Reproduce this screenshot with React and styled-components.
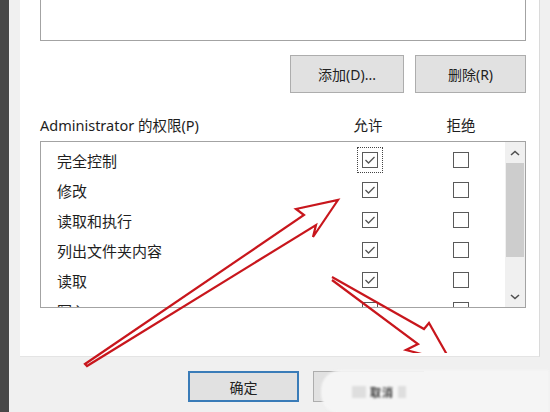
import React from "react";
import styled, { createGlobalStyle } from "styled-components";

const GlobalStyle = createGlobalStyle`
  html, body { margin: 0; padding: 0; background: #f0f0f0; }
  body { font-family: "Noto Sans", "Noto Sans CJK SC", sans-serif; color: #1e1e1e; }
  * { box-sizing: border-box; }
`;

const Page = styled.div`
  position: relative;
  width: 550px;
  height: 412px;
  overflow: hidden;
  display: flex;
  background: #f0f0f0;
`;

const DarkBar = styled.div`
  width: 9px;
  flex: none;
  background: #474747;
`;

const Main = styled.div`
  flex: 1;
  display: flex;
  flex-direction: column;
`;

const PanelWrap = styled.div`
  height: 357px;
  padding-left: 11px;
  display: flex;
`;

const Panel = styled.div`
  width: 520px;
  height: 100%;
  background: #fff;
  border-right: 1px solid #dadada;
  border-bottom: 1px solid #e4e4e4;
  padding: 0 13px 0 20px;
  display: flex;
  flex-direction: column;
`;

const TopList = styled.div`
  height: 41px;
  border: 1px solid #a3a3a3;
  border-top: none;
  background: #fff;
`;

const ButtonRow = styled.div`
  margin-top: 14px;
  display: flex;
  justify-content: flex-end;
  gap: 11px;
`;

const Button = styled.div`
  width: ${(p) => p.$w || 111}px;
  height: ${(p) => p.$h || 38}px;
  background: #e1e1e1;
  border: ${(p) => (p.$primary ? "2px solid #3a7cb8" : "1px solid #adadad")};
  display: flex;
  align-items: center;
  justify-content: center;
  font-size: 14px;
  color: #222;
`;

const Columns = styled.div`
  display: grid;
  grid-template-columns: 283px 94px 88px;
  align-items: center;
`;

const Header = styled(Columns)`
  margin-top: 20px;
  height: 22px;
  font-size: 14.5px;
`;

const HeadLabel = styled.div`
  text-align: ${(p) => (p.$center ? "center" : "left")};
  padding-right: ${(p) => p.$shift || 0}px;
  white-space: nowrap;
`;

const PermList = styled.div`
  margin-top: 6px;
  height: 167px;
  border: 1px solid #a3a3a3;
  display: flex;
  overflow: hidden;
`;

const Rows = styled.div`
  flex: 1;
  padding-top: 3px;
  overflow: hidden;
`;

const Row = styled(Columns)`
  height: 30px;
  grid-template-columns: 282px 94px 88px;
  font-size: 15px;
`;

const RowName = styled.div`
  padding-left: 16px;
  white-space: nowrap;
`;

const Cell = styled.div`
  display: flex;
  justify-content: center;
  align-items: center;
`;

const Box = styled.div`
  width: 16px;
  height: 16px;
  border: 1px solid #5a5a5a;
  background: #fff;
  display: flex;
  align-items: center;
  justify-content: center;
  outline: ${(p) => (p.$focus ? "1px dotted #444" : "none")};
  outline-offset: 4px;
`;

const Scrollbar = styled.div`
  width: 20px;
  flex: none;
  background: #f0f0f0;
  display: flex;
  flex-direction: column;
`;

const ScrollArrow = styled.div`
  height: 21px;
  display: flex;
  align-items: center;
  justify-content: center;
`;

const Thumb = styled.div`
  height: 94px;
  margin: 0 1px;
  background: #cdcdcd;
`;

const Track = styled.div`
  flex: 1;
`;

const Footer = styled.div`
  flex: 1;
  display: flex;
  gap: 14px;
  padding: 14px 0 0 179px;
`;

const Smear = styled.div`
  position: absolute;
  left: 321px;
  top: 370px;
  width: 228px;
  height: 44px;
  border-radius: 20px 0 0 20px;
  background: #f5f5f5;
  filter: blur(1.2px);
  display: flex;
  align-items: center;
  padding-left: 31px;
  gap: 4px;
`;

const SmearText = styled.span`
  font-family: "Noto Sans CJK SC", sans-serif;
  font-size: 11px;
  font-weight: 700;
  color: #3a3a3a;
  letter-spacing: 1px;
`;

const Patch = styled.span`
  width: ${(p) => p.$w}px;
  height: 12px;
  background: #dedede;
`;

const Overlay = styled.svg`
  position: absolute;
  left: 0;
  top: 0;
  pointer-events: none;
`;

const Check = () => (
  <svg width="12" height="12" viewBox="0 0 12 12">
    <polyline points="1.5,6 4.5,9 10.5,3" fill="none" stroke="#555" strokeWidth="1.3" />
  </svg>
);

const Chevron = ({ up }) => (
  <svg width="10" height="6" viewBox="0 0 10 6">
    <polyline
      points={up ? "1,5 5,1.5 9,5" : "1,1 5,4.5 9,1"}
      fill="none"
      stroke="#505050"
      strokeWidth="1.6"
    />
  </svg>
);

const perms = ["完全控制", "修改", "读取和执行", "列出文件夹内容", "读取", "写入"];

export default function App() {
  return (
    <>
      <GlobalStyle />
      <Page>
        <DarkBar />
        <Main>
          <PanelWrap>
            <Panel>
              <TopList />
              <ButtonRow>
                <Button $w={114}>添加(D)...</Button>
                <Button $w={111}>删除(R)</Button>
              </ButtonRow>
              <Header>
                <HeadLabel>Administrator 的权限(P)</HeadLabel>
                <HeadLabel $center $shift={4}>允许</HeadLabel>
                <HeadLabel $center>拒绝</HeadLabel>
              </Header>
              <PermList>
                <Rows>
                  {perms.map((p, i) => (
                    <Row key={p}>
                      <RowName>{p}</RowName>
                      <Cell>
                        <Box $focus={i === 0}>
                          <Check />
                        </Box>
                      </Cell>
                      <Cell>
                        <Box />
                      </Cell>
                    </Row>
                  ))}
                </Rows>
                <Scrollbar>
                  <ScrollArrow>
                    <Chevron up />
                  </ScrollArrow>
                  <Thumb />
                  <Track />
                  <ScrollArrow>
                    <Chevron />
                  </ScrollArrow>
                </Scrollbar>
              </PermList>
            </Panel>
          </PanelWrap>
          <Footer>
            <Button $primary $h={31}>确定</Button>
            <Button $h={31} />
          </Footer>
        </Main>
        <Smear>
          <Patch $w={14} />
          <SmearText>取消</SmearText>
          <Patch $w={8} />
        </Smear>
        <Overlay width="550" height="412" viewBox="0 0 550 412">
          <defs>
            <clipPath id="clipTop">
              <rect x="0" y="0" width="550" height="353" />
            </clipPath>
            <filter id="soft">
              <feGaussianBlur stdDeviation="0.45" />
            </filter>
          </defs>
          <g filter="url(#soft)" stroke="#c8161d" strokeWidth="2.2" fill="none" strokeLinejoin="miter">
            <polygon points="85,364 304,215 296,209 338,200 313,237 316,225 87,366" />
            <g clipPath="url(#clipTop)">
              <polyline points="332,277 424,329 429,323 450,360" />
              <polyline points="332,280 418,344 406,350 452,362" />
            </g>
          </g>
        </Overlay>
      </Page>
    </>
  );
}
